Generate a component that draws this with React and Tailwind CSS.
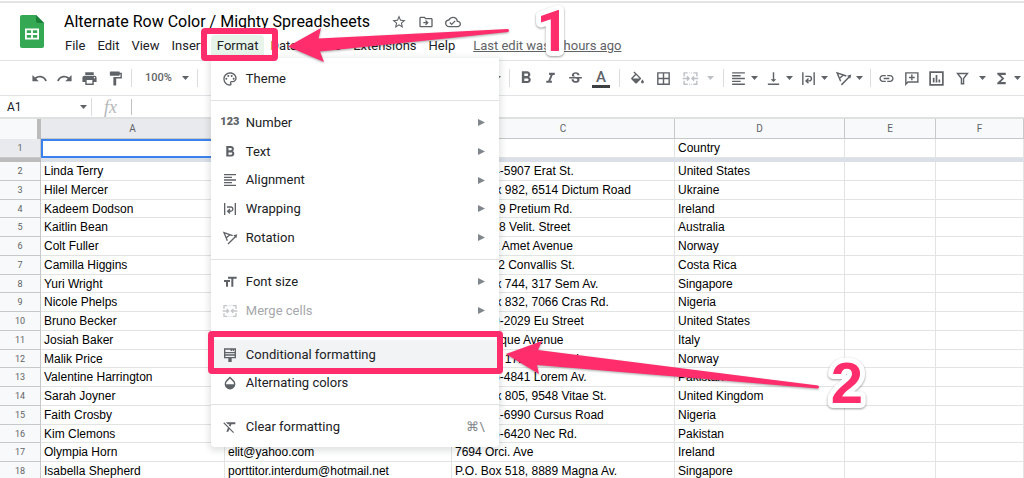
import React from "react";
import clsx from "clsx";
import {
  MdBorderAll,
  MdFormatAlignLeft,
  MdFormatBold,
  MdFormatClear,
  MdFormatItalic,
  MdFormatPaint,
  MdFormatSize,
  MdFunctions,
  MdLink,
  MdOpacity,
  MdOutlineCloudDone,
  MdOutlineDriveFileMove,
  MdOutlinePalette,
  MdPrint,
  MdRedo,
  MdStarBorder,
  MdStrikethroughS,
  MdUndo,
  MdVerticalAlignBottom,
} from "react-icons/md";

/* ---------- icons ---------- */

function SheetsLogo() {
  return (
    <svg viewBox="0 0 24 33" className="mt-0.5 w-6 h-[33px]" aria-hidden="true">
      <path d="M2 0h14l8 8v23a2 2 0 0 1-2 2H2a2 2 0 0 1-2-2V2a2 2 0 0 1 2-2z" fill="#34a853" />
      <path d="M16 0l8 8h-6a2 2 0 0 1-2-2z" fill="#188038" />
      <path
        d="M5 13.500h14v11H5zM6.800 15.300v2.800h4.300v-2.800zM12.900 15.300v2.800h4.300v-2.800zM6.800 19.900v2.800h4.300v-2.800zM12.900 19.900v2.800h4.300v-2.800z"
        fill="#fff"
        fillRule="evenodd"
      />
    </svg>
  );
}

function StrokeIcon({ size = 17, width = 2, children }) {
  return (
    <svg
      viewBox="0 0 24 24"
      width={size}
      height={size}
      fill="none"
      stroke="currentColor"
      strokeWidth={width}
      aria-hidden="true"
    >
      {children}
    </svg>
  );
}

function MergeIcon({ size }) {
  return (
    <StrokeIcon size={size}>
      <path d="M8 4H3v5M16 4h5v5M8 20H3v-5M16 20h5v-5M11 4h-1M13 4h1M11 20h-1M13 20h1" />
      <path d="M1 12h8M23 12h-8M7 9l3 3-3 3M17 9l-3 3 3 3" />
    </StrokeIcon>
  );
}

function WrapIcon({ size }) {
  return (
    <StrokeIcon size={size}>
      <path d="M4 3v18M20 3v18M7.500 9h5.500a3.200 3.200 0 0 1 0 6.400H9M12 12l-3.500 3.400 3.500 3.400" />
    </StrokeIcon>
  );
}

function RotateIcon({ size }) {
  return (
    <StrokeIcon size={size}>
      <path d="M8 16L3 4l13 4.500M6 12L12 7M9 21L20 10" />
      <path d="M23 6.500l-1.500 6-4.500-4.500z" fill="currentColor" stroke="none" />
    </StrokeIcon>
  );
}

function FillIcon({ size }) {
  return (
    <svg viewBox="0 0 24 20" width={size} height={size} fill="currentColor" aria-hidden="true">
      <path d="M16.560 8.940L7.620 0 6.210 1.410l2.380 2.380-5.150 5.150a1.490 1.490 0 0 0 0 2.120l5.500 5.500c.29.29.68.44 1.060.44s.77-.15 1.060-.44l5.500-5.500c.59-.58.59-1.530 0-2.120zM5.210 10L10 5.210 14.790 10H5.210zM19 11.500s-2 2.170-2 3.500c0 1.100.9 2 2 2s2-.9 2-2c0-1.330-2-3.500-2-3.500z" />
    </svg>
  );
}

function CommentIcon({ size }) {
  return (
    <StrokeIcon size={size}>
      <path d="M4 20V4h17v13H7z M12.500 6.500v8M8.500 10.500h8" />
    </StrokeIcon>
  );
}

function ChartIcon({ size }) {
  return (
    <StrokeIcon size={size} width={2.4}>
      <path d="M3 3h18v18H3zM8 17.500v-6.500M12 17.500V7M16 17.500v-4" />
    </StrokeIcon>
  );
}

function FilterIcon({ size }) {
  return (
    <StrokeIcon size={size}>
      <path d="M5 5h14l-5.500 7V19.500h-3V12z" />
    </StrokeIcon>
  );
}

function ConditionalIcon({ size }) {
  return (
    <StrokeIcon size={size}>
      <path d="M4 3h16v9H4zM4 8.500h16M14 3v3M17 3v3" />
      <path d="M4 12v4h16v-4" />
      <path d="M9.500 15h5v7.500h-5z" fill="currentColor" stroke="none" />
    </StrokeIcon>
  );
}

function NumberIcon() {
  return <span className="text-[11px] font-black">123</span>;
}

function BoldIcon() {
  return <MdFormatBold size={20} />;
}

function TextColorIcon() {
  return (
    <span className="flex flex-col items-center">
      <span className="text-[15px] leading-4 font-medium">A</span>
      <span className="w-[18px] h-[3px] bg-[#3c4043]" />
    </span>
  );
}

function Caret() {
  return (
    <svg viewBox="0 0 7 4" className="w-[7px] h-1 shrink-0" aria-hidden="true">
      <path d="M0 0h7L3.500 4z" fill="currentColor" />
    </svg>
  );
}

/* ---------- title and menu bar ---------- */

const FORMAT_MENU = [
  { label: "Theme", icon: MdOutlinePalette },
  null,
  { label: "Number", icon: NumberIcon, sub: true },
  { label: "Text", icon: BoldIcon, sub: true },
  { label: "Alignment", icon: MdFormatAlignLeft, sub: true },
  { label: "Wrapping", icon: WrapIcon, sub: true },
  { label: "Rotation", icon: RotateIcon, sub: true },
  null,
  { label: "Font size", icon: MdFormatSize, sub: true },
  { label: "Merge cells", icon: MergeIcon, sub: true, disabled: true },
  null,
  { label: "Conditional formatting", icon: ConditionalIcon, active: true },
  { label: "Alternating colors", icon: MdOpacity },
  null,
  { label: "Clear formatting", icon: MdFormatClear, shortcut: "⌘\\" },
];

function FormatMenu() {
  return (
    <ul
      role="menu"
      className="absolute top-full left-0 z-10 mt-px w-[288px] py-1.5 bg-white rounded-b shadow-[0_2px_6px_2px_rgba(60,64,67,0.15)]"
    >
      {FORMAT_MENU.map((item, i) =>
        item ? (
          <li key={item.label} role="none" className="h-[29px] nth-[8n+5]:h-7">
            <button
              type="button"
              role="menuitem"
              disabled={item.disabled}
              className={clsx(
                "w-full h-full pl-2.5 pr-3.5 flex items-center text-[13px] text-left",
                item.disabled ? "text-[#a5a8ac]" : "text-[#202124]",
                item.active && "bg-[#f1f3f4]"
              )}
            >
              <span
                className={clsx(
                  "w-[18px] mr-[7px] flex justify-center",
                  item.disabled ? "text-[#c4c7ca]" : "text-[#5f6368]"
                )}
              >
                <item.icon size={16} />
              </span>
              <span className="flex-1">{item.label}</span>
              {item.sub && (
                <svg viewBox="0 0 7 7" className="w-[7px] h-[7px]" aria-hidden="true">
                  <path d="M0 0l7 3.500L0 7z" fill="#80868b" />
                </svg>
              )}
              {item.shortcut && <span className="text-[#80868b]">{item.shortcut}</span>}
            </button>
          </li>
        ) : (
          <li key={i} role="separator" className="h-[15px] py-[7px]">
            <div className="h-px bg-[#dfe1e5]" />
          </li>
        )
      )}
    </ul>
  );
}

const MENUS = ["File", "Edit", "View", "Insert", "Format", "Data", "Tools", "Extensions", "Help"];

function Header() {
  return (
    <header className="flex h-[59px] pl-5 pt-2.5 border-t-2 border-[#e4e4e6] whitespace-nowrap">
      <SheetsLogo />
      <div className="ml-[15px]">
        <div className="flex items-center h-[18px] pl-[5px]">
          <h1 className="text-base text-black">Alternate Row Color / Mighty Spreadsheets</h1>
          <div className="ml-[21px] flex gap-[11px] text-[#5f6368]">
            <button type="button" aria-label="Star">
              <MdStarBorder size={16} />
            </button>
            <button type="button" aria-label="Move">
              <MdOutlineDriveFileMove size={16} />
            </button>
            <button type="button" aria-label="Document status">
              <MdOutlineCloudDone size={16} />
            </button>
          </div>
        </div>
        <nav className="mt-1 flex items-center text-[13px] text-[#202124]">
          {MENUS.map((name) => (
            <div key={name} className="relative">
              <button
                type="button"
                className={clsx("h-[22px] px-1.5 rounded-t-sm", name === "Format" && "bg-[#e6f4ea]")}
              >
                {name}
              </button>
              {name === "Format" && <FormatMenu />}
            </div>
          ))}
          <a href="#history" className="ml-3 text-[#5f6368] underline">
            Last edit was 2 hours ago
          </a>
        </nav>
      </div>
    </header>
  );
}

/* ---------- toolbar ---------- */

function Tool({ label, icon: Icon, className = "w-[25px]" }) {
  return (
    <button
      type="button"
      aria-label={label}
      className={clsx("h-7 shrink-0 flex items-center justify-center", className)}
    >
      <Icon size={17} />
    </button>
  );
}

function DropTool({ label, icon: Icon, className = "w-[35px] gap-1", ...rest }) {
  return (
    <button
      type="button"
      aria-label={label}
      className={clsx("h-7 shrink-0 flex items-center justify-center", className)}
      {...rest}
    >
      <Icon size={17} />
      <Caret />
    </button>
  );
}

function Divider() {
  return <div className="w-px h-[18px] shrink-0 bg-[#dadce0]" />;
}

function Toolbar() {
  return (
    <div
      role="toolbar"
      className="flex items-center h-9 pl-[27px] border-y border-[#e1e3e6] text-[#5f6368] overflow-hidden"
    >
      <Tool label="Undo" icon={MdUndo} />
      <Tool label="Redo" icon={MdRedo} />
      <Tool label="Print" icon={MdPrint} />
      <Tool label="Paint format" icon={MdFormatPaint} className="w-[27px] mr-[2px]" />
      <Divider />
      <button
        type="button"
        className="w-[65px] h-7 shrink-0 flex items-center justify-between pl-[13px] pr-2 text-[11px] font-medium"
      >
        100%
        <Caret />
      </button>
      <Divider />
      <button
        type="button"
        aria-label="Font size"
        className="w-[311px] h-7 pr-2 shrink-0 flex items-center justify-end"
      >
        <Caret />
      </button>
      <Divider />
      <div className="flex pl-[3px] pr-[5px]">
        <Tool label="Bold" icon={BoldIcon} />
        <Tool label="Italic" icon={MdFormatItalic} />
        <Tool label="Strikethrough" icon={MdStrikethroughS} />
        <Tool label="Text color" icon={TextColorIcon} className="w-[26px]" />
      </div>
      <Divider />
      <div className="flex pl-1 pr-[9px]">
        <Tool label="Fill color" icon={FillIcon} className="w-[26px]" />
        <Tool label="Borders" icon={MdBorderAll} className="w-[26px]" />
        <DropTool
          label="Merge cells"
          icon={MergeIcon}
          disabled
          className="w-8 ml-1.5 gap-2 text-[#bdc1c6]"
        />
      </div>
      <Divider />
      <div className="flex pl-0.5 pr-1">
        <DropTool label="Horizontal align" icon={MdFormatAlignLeft} />
        <DropTool label="Vertical align" icon={MdVerticalAlignBottom} />
        <DropTool label="Text wrapping" icon={WrapIcon} />
        <DropTool label="Text rotation" icon={RotateIcon} />
      </div>
      <Divider />
      <div className="flex pl-[3px]">
        <Tool label="Insert link" icon={MdLink} />
        <Tool label="Insert comment" icon={CommentIcon} />
        <Tool label="Insert chart" icon={ChartIcon} />
        <DropTool label="Filter" icon={FilterIcon} className="w-[41px] gap-2" />
        <DropTool label="Functions" icon={MdFunctions} className="w-[34px] gap-1" />
      </div>
    </div>
  );
}

function FormulaBar() {
  return (
    <div className="flex items-center h-[21px] text-xs text-[#202124]">
      <input
        aria-label="Name box"
        defaultValue="A1"
        className="w-20 pl-[7px] text-xs outline-none"
      />
      <span className="text-[#5f6368]">
        <Caret />
      </span>
      <div className="ml-1 w-px h-[18px] bg-[#dadce0]" />
      <label
        htmlFor="formula"
        className="w-[39px] pl-3 font-['Liberation_Serif',serif] italic text-lg leading-5 text-[#b4b7ba]"
      >
        fx
      </label>
      <div className="w-px h-4 bg-[#c0c0c0]" />
      <input id="formula" className="flex-1 pl-2 outline-none" />
    </div>
  );
}

/* ---------- grid ---------- */

const COLUMNS = ["A", "B", "C", "D", "E", "F"];

const ROWS = [
  ["Linda Terry", "", "Ap #714-5907 Erat St.", "United States"],
  ["Hilel Mercer", "", "P.O. Box 982, 6514 Dictum Road", "Ukraine"],
  ["Kadeem Dodson", "", "849-7649 Pretium Rd.", "Ireland"],
  ["Kaitlin Bean", "", "312-7768 Velit. Street", "Australia"],
  ["Colt Fuller", "", "5543 Sit Amet Avenue", "Norway"],
  ["Camilla Higgins", "", "118-2832 Convallis St.", "Costa Rica"],
  ["Yuri Wright", "", "P.O. Box 744, 317 Sem Av.", "Singapore"],
  ["Nicole Phelps", "", "P.O. Box 832, 7066 Cras Rd.", "Nigeria"],
  ["Bruno Becker", "", "Ap #789-2029 Eu Street", "United States"],
  ["Josiah Baker", "", "1523 Neque Avenue", "Italy"],
  ["Malik Price", "", "P.O. Box 171, 84 Ut Rd.", "Norway"],
  ["Valentine Harrington", "", "Ap #325-4841 Lorem Av.", "Pakistan"],
  ["Sarah Joyner", "", "P.O. Box 805, 9548 Vitae St.", "United Kingdom"],
  ["Faith Crosby", "", "Ap #461-6990 Cursus Road", "Nigeria"],
  ["Kim Clemons", "", "Ap #206-6420 Nec Rd.", "Pakistan"],
  ["Olympia Horn", "elit@yahoo.com", "7694 Orci. Ave", "Ireland"],
  ["Isabella Shepherd", "porttitor.interdum@hotmail.net", "P.O. Box 518, 8889 Magna Av.", "Singapore"],
];

function Cell({ children, selected }) {
  return (
    <td
      className={clsx(
        "p-0 pl-[3px] text-xs whitespace-nowrap overflow-hidden",
        selected ? "border-2 border-[#3b82ec]" : "border-r border-b border-[#e2e3e3]"
      )}
    >
      {children}
    </td>
  );
}

function RowHeader({ n, active }) {
  return (
    <th
      scope="row"
      className={clsx(
        "p-0 border-r border-b border-[#c6c8ca] font-[Roboto,sans-serif] text-[9px] leading-4 font-normal text-[#5f6368]",
        active ? "bg-[#e8eaed]" : "bg-[#f8f9fa]"
      )}
    >
      {n}
    </th>
  );
}

function Sheet() {
  return (
    <table className="w-full table-fixed border-separate border-spacing-0 border-t-2 border-[#dfe1e1] font-['Liberation_Sans',Arial,sans-serif] text-black">
      <colgroup>
        <col className="w-[41px]" />
        <col className="w-[184px]" />
        <col className="w-[227px]" />
        <col className="w-[223px]" />
        <col className="w-[170px]" />
        <col className="w-[91px]" />
        <col />
      </colgroup>
      <thead className="font-[Roboto,sans-serif]">
        <tr className="h-5">
          <td className="p-0 bg-[#f8f9fa] border-r-4 border-[#bcbcbc]" />
          {COLUMNS.map((c) => (
            <th
              key={c}
              scope="col"
              className={clsx(
                "p-0 border-r border-b border-[#c6c8ca] text-[10px] leading-4 font-normal text-[#5f6368]",
                c === "A" ? "bg-[#e8eaed]" : "bg-[#f8f9fa]"
              )}
            >
              {c}
            </th>
          ))}
        </tr>
      </thead>
      <tbody>
        <tr className="h-[19px]">
          <RowHeader n={1} active />
          <Cell selected />
          <Cell />
          <Cell />
          <Cell>Country</Cell>
          <Cell />
          <Cell />
        </tr>
        <tr className="h-1">
          <td className="p-0 bg-[#bcbcbc]" />
          <td colSpan={6} className="p-0 bg-[#dadfe8]" />
        </tr>
      </tbody>
      <tbody>
        {ROWS.map((row, i) => (
          <tr key={row[0]} className="h-[19px] nth-[4n+3]:h-[18px]">
            <RowHeader n={i + 2} />
            {row.map((value, j) => (
              <Cell key={j}>{value}</Cell>
            ))}
            <Cell />
            <Cell />
          </tr>
        ))}
      </tbody>
    </table>
  );
}

/* ---------- tutorial callouts ---------- */

function Callouts() {
  return (
    <svg
      width="1024"
      height="478"
      viewBox="0 0 1024 478"
      className="absolute top-0 left-0 z-20 pointer-events-none"
    >
      <g fill="none" stroke="#ff2d6c" strokeWidth="6">
        <rect x="204" y="31" width="71" height="27" rx="1" />
        <rect x="211" y="334" width="289" height="37" rx="1" />
      </g>
      <g fill="#ff2d6c" className="drop-shadow-[0_1px_1px_rgba(0,0,0,0.35)]">
        <path d="M288 46.500L321 28L318.500 38.500L508 29Q510 30.500 508 32L320 51.500L324 62z" />
        <path d="M506 354L542 341L538 350L818 385.500Q820 387 818 388.500L537 365L539 374z" />
      </g>
      <g
        fill="#ff2d6c"
        stroke="#fff"
        strokeWidth="10"
        strokeLinejoin="round"
        paintOrder="stroke"
        textAnchor="middle"
        className="text-[58px] font-bold drop-shadow-[0_1px_1px_rgba(0,0,0,0.4)]"
      >
        <text x="553" y="51" className="font-[Roboto,sans-serif]">
          1
        </text>
        <text x="847" y="403" className="font-['Liberation_Sans',Arial,sans-serif]">
          2
        </text>
      </g>
    </svg>
  );
}

export default function App() {
  return (
    <div className="relative h-screen overflow-hidden bg-white pt-px font-[Roboto,sans-serif]">
      <Header />
      <Toolbar />
      <FormulaBar />
      <Sheet />
      <Callouts />
    </div>
  );
}
